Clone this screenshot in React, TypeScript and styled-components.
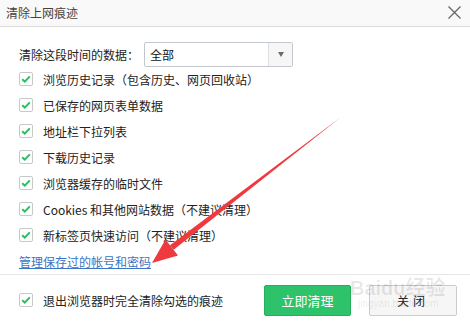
import React from "react";
import styled, { createGlobalStyle } from "styled-components";

const Global = createGlobalStyle`
  html, body { margin: 0; padding: 0; background: #fff; }
  body { font-family: "Noto Sans CJK SC", "Noto Sans", sans-serif; color: #333; }
  * { box-sizing: border-box; }
`;

const Dialog = styled.div`
  position: relative;
  width: 470px;
  height: 322px;
  background: #fff;
  display: flex;
  flex-direction: column;
  overflow: hidden;
`;

const TitleBar = styled.div`
  height: 27px;
  flex: none;
  background: #f9f9f9;
  border-bottom: 1px solid #dcdcdc;
  display: flex;
  align-items: center;
  justify-content: space-between;
  padding: 0 9px 1px 6px;
  font-size: 12px;
  color: #444;
`;

const CloseIcon = styled.svg`
  width: 13px;
  height: 13px;
  display: block;
`;

const Body = styled.div`
  flex: 1;
  padding: 15px 19px 0 19px;
  display: flex;
  flex-direction: column;
`;

const SelectRow = styled.div`
  display: flex;
  align-items: center;
  height: 24px;
  font-size: 12px;
  color: #222;
`;

const Label = styled.span`
  width: 125px;
`;

const Select = styled.div`
  width: 149px;
  height: 25px;
  border: 1px solid #c3c8cf;
  border-radius: 2px;
  display: flex;
  align-items: stretch;
  background: #fff;
`;

const SelectValue = styled.div`
  flex: 1;
  display: flex;
  align-items: center;
  padding-left: 5px;
  font-size: 12px;
  color: #111;
`;

const SelectArrow = styled.div`
  width: 24px;
  border-left: 1px solid #dcdfe3;
  background: #f6f6f6;
  display: flex;
  align-items: center;
  justify-content: center;
  &::after {
    content: "";
    border-left: 3.5px solid transparent;
    border-right: 3.5px solid transparent;
    border-top: 5px solid #6b6b6b;
  }
`;

const List = styled.div`
  display: flex;
  flex-direction: column;
`;

const Row = styled.label`
  height: 26px;
  display: flex;
  align-items: center;
  gap: 10px;
  font-size: 12px;
  color: #222;
`;

const Box = styled.span`
  width: 14px;
  height: 14px;
  border: 1px solid #c8c8c8;
  border-radius: 2px;
  background: #fff;
  display: flex;
  align-items: center;
  justify-content: center;
  flex: none;
`;

const LinkRow = styled.div`
  height: 26px;
  display: flex;
  align-items: center;
`;

const Link = styled.a`
  font-size: 12px;
  color: #3b74c4;
  text-decoration: underline;
  cursor: pointer;
`;

const Footer = styled.div`
  height: 49px;
  flex: none;
  border-top: 1px solid #e6e6e6;
  display: flex;
  align-items: center;
  padding: 2px 13px 0 19px;
`;

const FooterCheck = styled(Row)`
  flex: 1;
`;

const Button = styled.button<{ $primary?: boolean }>`
  height: 31px;
  width: ${(p) => (p.$primary ? "87px" : "88px")};
  margin-left: ${(p) => (p.$primary ? "0" : "18px")};
  border-radius: 2px;
  font-family: inherit;
  font-size: ${(p) => (p.$primary ? "13px" : "12px")};
  border: 1px solid ${(p) => (p.$primary ? "#25ae5c" : "#cccccc")};
  background: ${(p) => (p.$primary ? "#2ec26a" : "#f6f6f6")};
  color: ${(p) => (p.$primary ? "#fff" : "#222")};
  letter-spacing: ${(p) => (p.$primary ? "0" : "4px")};
  padding: 0;
`;

const Overlay = styled.svg`
  position: absolute;
  left: 0;
  top: 0;
  width: 470px;
  height: 322px;
  pointer-events: none;
`;

const Watermark = styled.div`
  position: absolute;
  left: 350px;
  top: 278px;
  display: flex;
  flex-direction: column;
  align-items: flex-start;
  pointer-events: none;
  color: rgba(0, 0, 0, 0.09);
  font-family: "Liberation Sans", "Noto Sans CJK SC", sans-serif;
`;

const WmMain = styled.span`
  font-size: 20px;
  font-weight: bold;
  line-height: 20px;
  white-space: nowrap;
`;

const WmSub = styled.span`
  font-size: 10px;
  line-height: 12px;
  margin-left: 8px;
`;

const Check = () => (
  <Box>
    <svg width="10" height="8" viewBox="0 0 10 8">
      <path d="M1.2 4.2 L3.8 6.6 L8.8 1.4" fill="none" stroke="#2dbd5f" strokeWidth="2" />
    </svg>
  </Box>
);

const items = [
  "浏览历史记录（包含历史、网页回收站）",
  "已保存的网页表单数据",
  "地址栏下拉列表",
  "下载历史记录",
  "浏览器缓存的临时文件",
  "Cookies 和其他网站数据（不建议清理）",
  "新标签页快速访问（不建议清理）",
];

export default function App() {
  return (
    <>
      <Global />
      <Dialog>
        <TitleBar>
          <span>清除上网痕迹</span>
          <CloseIcon viewBox="0 0 13 13">
            <path d="M0.5 0.5 L12.5 12.5 M12.5 0.5 L0.5 12.5" stroke="#666" strokeWidth="1.3" />
          </CloseIcon>
        </TitleBar>
        <Body>
          <SelectRow>
            <Label>清除这段时间的数据：</Label>
            <Select>
              <SelectValue>全部</SelectValue>
              <SelectArrow />
            </Select>
          </SelectRow>
          <List>
            {items.map((t) => (
              <Row key={t}>
                <Check />
                <span>{t}</span>
              </Row>
            ))}
          </List>
          <LinkRow>
            <Link>管理保存过的帐号和密码</Link>
          </LinkRow>
        </Body>
        <Footer>
          <FooterCheck>
            <Check />
            <span>退出浏览器时完全清除勾选的痕迹</span>
          </FooterCheck>
          <Button $primary>立即清理</Button>
          <Button>关闭</Button>
        </Footer>
        <Watermark>
          <WmMain>Baidu经验</WmMain>
          <WmSub>jingyan.baidu.com</WmSub>
        </Watermark>
        <Overlay viewBox="0 0 470 322">
          <polygon points="341,117 173.6,249.8 170,245.2" fill="#ee3a3e" />
          <polygon points="152,263 178,255.5 165.5,239.5" fill="#ee3a3e" />
        </Overlay>
      </Dialog>
    </>
  );
}
